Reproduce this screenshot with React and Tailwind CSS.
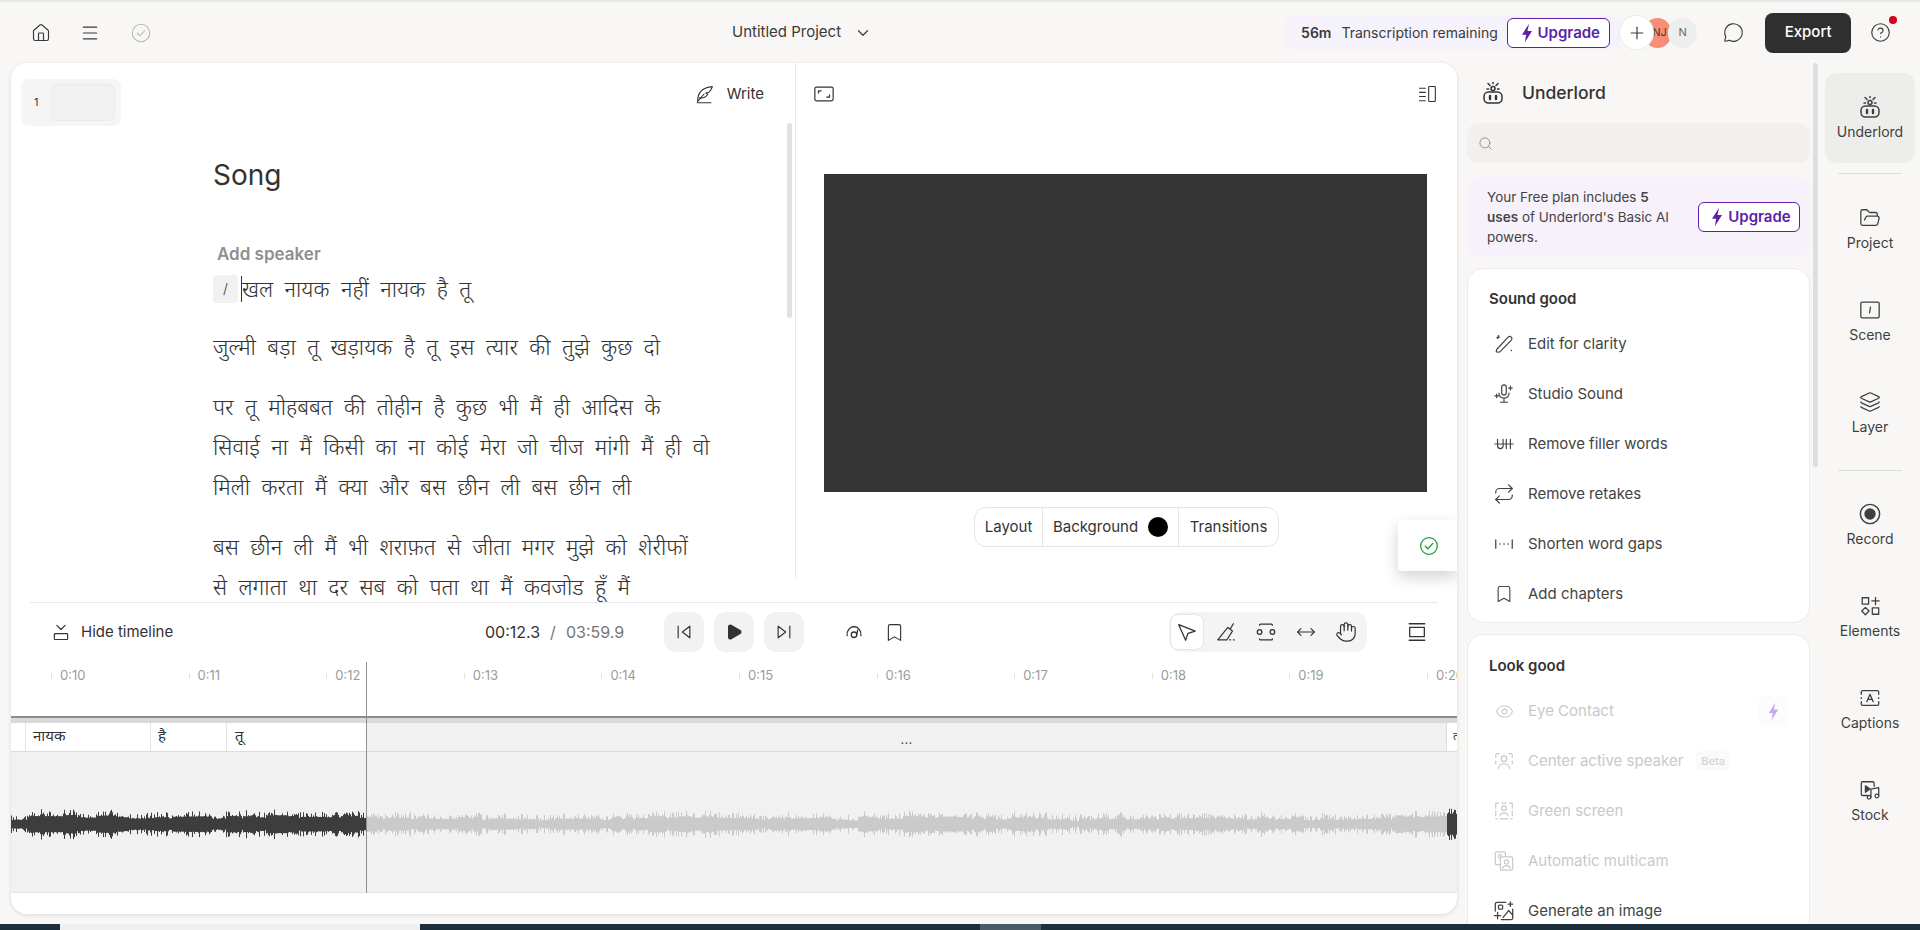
import { ChevronDown, Search, CircleHelp, Plus, Play, FolderOpen, Layers, Home, Bookmark, Hand, Eye, Repeat, MessageCircle, MoveHorizontal } from "lucide-react"

const line = "fill-none stroke-current"

// small svg wrapper so all custom icons share the same stroke settings
function Ico({ size = 20, sw = 1.4, className = "", children }) {
    return (
        <svg width={size} height={size} viewBox="0 0 24 24" strokeWidth={sw} strokeLinecap="round" strokeLinejoin="round" className={`${line} shrink-0 ${className}`}>
            {children}
        </svg>
    )
}

const Bolt = ({ size = 20, className = "" }) => (
    <svg width={size} height={size} viewBox="0 0 24 24" className={`shrink-0 fill-current ${className}`}>
        <path d="M14.500 1L6 14h5l-1.500 9L18 9.500h-5.500z" />
    </svg>
)
const MenuIcon = () => <Ico size={20}><path d="M4 5h16M4 12h16M4 19h16" /></Ico>
const SavedIcon = () => <Ico size={22} sw={1.2} className="text-[#b9b9b7]"><circle cx="12" cy="12" r="9.500" /><path d="M8 12.200l2.800 2.800 5-5.400" /></Ico>
const FeatherIcon = () => (
    <Ico size={22} sw={1.2}>
        <path d="M4 20c0-8 4-15 16-16-1 3-2 5-4 6l-3 1 2 1c-1 3-5 5-9 4" />
        <path d="M3.500 21.500h15M4 20l7-8" />
    </Ico>
)
const RobotIcon = ({ size = 24 }) => (
    <Ico size={size} sw={1.5}>
        <rect x="3" y="11" width="18" height="11" rx="4.500" />
        <path d="M9 15v3M15 15v3" strokeWidth="2.400" />
        <circle cx="12" cy="7.500" r="2" />
        <path d="M7 2.500l2 2M17 2.500l-2 2M12 1.500v1M6 8h1.500M16.500 8H18" />
    </Ico>
)
const PanelIcon = () => (
    <Ico size={20} sw={1.3}>
        <rect x="14" y="3" width="8" height="18" rx="1" />
        <path d="M3 5h7M3 10h7M3 15h7M3 20h7" />
    </Ico>
)
const ExpandIcon = () => (
    <Ico size={22} sw={1.3}>
        <rect x="2" y="4.500" width="20" height="15" rx="2" />
        <path d="M6 11V8.500h3M18 13v2.500h-3" />
    </Ico>
)
const HideTimelineIcon = () => (
    <Ico size={20} sw={1.4}>
        <rect x="4" y="14" width="16" height="7" rx="1" />
        <path d="M7 4l5 5 5-5" />
    </Ico>
)
const PrevIcon = () => <Ico size={20}><path d="M5 5v14M19 5L10 12l9 7z" /></Ico>
const NextIcon = () => <Ico size={20}><path d="M19 5v14M5 5l9 7-9 7z" /></Ico>
const SpeedIcon = () => (
    <Ico size={22} sw={1.4}>
        <path d="M4.500 16A8.500 8.500 0 0 1 12 6a8.500 8.500 0 0 1 7.500 10" />
        <circle cx="12" cy="15" r="3" />
        <path d="M15 15l1-5" />
    </Ico>
)
const CursorIcon = () => <Ico size={22} sw={1.4}><path d="M3 4l18 7-8 2.500L10.500 21z" /></Ico>
const RazorIcon = () => (
    <Ico size={22} sw={1.3}>
        <path d="M3 20.500L14 7l5 4-6 9.500zM3 20.500h10M17 8l3-5M16 20.500h1M20 20.500h1" />
    </Ico>
)
const GapIcon = () => (
    <Ico size={22} sw={1.4}>
        <path d="M5 4.500c0-.6.4-1 1-1h12c.6 0 1 .4 1 1M5 19.500c0 .6.4 1 1 1h12c.6 0 1-.4 1-1" />
        <circle cx="5" cy="12" r="2.500" /><circle cx="19" cy="12" r="2.500" />
    </Ico>
)
const LayoutIcon = () => (
    <Ico size={22} sw={1.4}>
        <path d="M3.500 3h17M3.500 21h17" />
        <rect x="4" y="7" width="16" height="10" />
    </Ico>
)
const WandIcon = () => (
    <Ico size={22} sw={1.3}>
        <path d="M5 21l-1.500-.500L4 18 16.500 4.500c1-1 2.500-1 3.500 0s.8 2.300 0 3.200L7.500 20.500z" />
        <path d="M5 5.500v.1M20 19v.1M6 3v2M4.500 5h2" strokeWidth="1.700" />
    </Ico>
)
const MicIcon = () => (
    <Ico size={22} sw={1.3}>
        <rect x="9.500" y="2" width="5" height="11" rx="2.500" />
        <path d="M6.500 11c0 3 2 5.500 5.500 5.500s5.500-2.500 5.500-5.500M12 16.500V21M8 21h8M19 3.500v4M17 5.500h4M4 12v4M2 14h4" />
    </Ico>
)
const FillerIcon = () => (
    <Ico size={22} sw={1.3}>
        <path d="M5 7v7c0 2 1.200 3 3 3s3-1 3-3V7M14.500 7v10M19 7v10M2 12h20" />
    </Ico>
)
const GapsIcon = () => (
    <Ico size={22} sw={1.4}>
        <path d="M3 7.500v9M21 7.500v9" />
        <path d="M7.500 12h.1M12 12h.1M16.500 12h.1" strokeWidth="1.800" />
    </Ico>
)
const SpeakerIcon = () => (
    <Ico size={22} sw={1.3}>
        <circle cx="12" cy="9.500" r="3" />
        <path d="M6 20c.5-3.500 3-5 6-5s5.500 1.500 6 5M3 8V5c0-.6.4-1 1-1h2.500M21 8V5c0-.6-.4-1-1-1h-2.500M3 12v3M21 12v3" />
    </Ico>
)
const GreenIcon = () => (
    <Ico size={22} sw={1.3}>
        <circle cx="12" cy="9" r="2.500" />
        <path d="M7.500 17c.5-2 2.200-3 4.500-3s4 1 4.500 3M7.500 20.500h9M3 3.500h3M18 3.500h3M3 3.500V9M21 3.500V9M3 12v5M21 12v5M3 20.500h1.500M19.500 20.500H21M10 3.500h4" />
    </Ico>
)
const MulticamIcon = () => (
    <Ico size={22} sw={1.3}>
        <path d="M8 16H4a1.500 1.500 0 0 1-1.500-1.500v-11A1.500 1.500 0 0 1 4 2h8a1.500 1.500 0 0 1 1.500 1.500V6" />
        <circle cx="7.500" cy="6.500" r="1.800" />
        <rect x="8" y="7.500" width="13.500" height="14.500" rx="1.500" />
        <circle cx="14.700" cy="13" r="2.300" />
        <path d="M10.500 20c.6-2 2.200-3 4.200-3s3.600 1 4.200 3" />
    </Ico>
)
const ImageGenIcon = () => (
    <Ico size={22} sw={1.4}>
        <path d="M14 2.500H4.500a2 2 0 0 0-2 2V12M9 21.500h10.500a2 2 0 0 0 2-2V10" />
        <rect x="6" y="5.500" width="4.500" height="4.500" rx="1" />
        <path d="M11 19l6-7.500 4.500 5M19 2v5M16.500 4.500h5M5 13.500v7M1.500 17h7" />
    </Ico>
)
const SceneIcon = () => (
    <Ico size={22} sw={1.4}>
        <rect x="2" y="3.500" width="20" height="17" rx="1.500" />
        <path d="M12.500 9l-1 6" />
    </Ico>
)
const RecordIcon = () => (
    <svg width="22" height="22" viewBox="0 0 24 24" className="shrink-0">
        <circle cx="12" cy="12" r="10.500" fill="none" stroke="currentColor" strokeWidth="1.600" />
        <circle cx="12" cy="12" r="6.200" fill="currentColor" />
    </svg>
)
const ElementsIcon = () => (
    <Ico size={22} sw={1.4}>
        <rect x="3.500" y="3" width="7" height="7" />
        <path d="M18 2.500v8M14 6.500h8" />
        <path d="M7 13.500l4 4-4 4-4-4z" />
        <rect x="14.500" y="14" width="7" height="7" />
    </Ico>
)
const CaptionsIcon = () => (
    <Ico size={22} sw={1.4}>
        <path d="M2.500 8V5.500c0-.8.7-1.500 1.500-1.500h16c.8 0 1.500.7 1.500 1.500V8M2.500 16v2.500c0 .8.700 1.500 1.500 1.500h16c.8 0 1.500-.7 1.500-1.500V16M2.500 11.500v1M21.500 11.500v1" />
        <path d="M8.500 16l3.500-8 3.500 8M9.700 13.500h4.600" />
    </Ico>
)
const StockIcon = () => (
    <Ico size={22} sw={1.4}>
        <path d="M9 18H4a1.500 1.500 0 0 1-1.500-1.500v-12A1.500 1.500 0 0 1 4 3h11a1.500 1.500 0 0 1 1.500 1.500V8" />
        <path d="M7 7.500l5 3.500-5 3.500z" fill="currentColor" />
        <circle cx="11" cy="20" r="2" /><circle cx="19.500" cy="18.500" r="2" />
        <path d="M13 20v-9l8.500-1.500v9" />
    </Ico>
)

function UpgradeButton({ className = "" }) {
    return (
        <button className={`flex items-center justify-center gap-[1px] rounded-md border border-[#5b1fa8] bg-white text-[15px] font-semibold text-[#5b1fa8] ${className}`}>
            <Bolt />
            Upgrade
        </button>
    )
}

function Header() {
    return (
        <div className="flex h-[61px] items-center text-[#3a3a3a]">
            <div className="ml-[31px] w-[49px]"><Home size={20} strokeWidth={1.4} /></div>
            <div className="w-[50px]"><MenuIcon /></div>
            <SavedIcon />
            <div className="ml-[580px] flex items-center gap-[13px] text-[15px]">
                <span>Untitled Project</span>
                <ChevronDown size={18} strokeWidth={1.6} />
            </div>
            <div className="ml-[411px] flex h-[35px] w-[338px] items-center rounded-xl bg-[#f6f2fb] pl-[18px] text-sm">
                <span className="font-semibold">56m</span>
                <span className="ml-[10px] whitespace-nowrap">Transcription remaining</span>
                <UpgradeButton className="ml-[9px] h-[30px] w-[103px] shrink-0" />
            </div>
            <div className="ml-[-1px] flex items-center">
                <div className="z-10 flex h-[33px] w-[33px] items-center justify-center rounded-full bg-white shadow-[0_0_0_1px_#ececea]"><Plus size={20} strokeWidth={1.4} /></div>
                <div className="-ml-[9px] flex h-[30px] w-[27px] items-center justify-center rounded-full bg-[#f98c76] pl-1 text-[11px]">NJ</div>
                <div className="-ml-[3px] flex h-[30px] w-[29px] items-center justify-center rounded-full bg-[#eeeeec] text-[11px] text-[#666]">N</div>
            </div>
            <MessageCircle size={21} strokeWidth={1.3} className="ml-[26px]" />
            <button className="ml-[21px] h-[40px] w-[86px] rounded-lg bg-[#2f2f2f] text-[15px] font-medium text-white">Export</button>
            <div className="relative ml-[19px]">
                <CircleHelp size={21} strokeWidth={1.3} />
                <span className="absolute -top-[6px] -right-[6px] h-2 w-2 rounded-full bg-[#d5001c]" />
            </div>
        </div>
    )
}

const lyrics = [
    ["जुल्मी बड़ा तू खड़ायक है तू इस त्यार की तुझे कुछ दो"],
    ["पर तू मोहबबत की तोहीन है कुछ भी मैं ही आदिस के", "सिवाई ना मैं किसी का ना कोई मेरा जो चीज मांगी मैं ही वो", "मिली करता मैं क्या और बस छीन ली बस छीन ली"],
    ["बस छीन ली मैं भी शराफ़त से जीता मगर मुझे को शेरीफों", "से लगाता था दर सब को पता था मैं कवजोड हूँ मैं"],
]

function Editor() {
    return (
        <div className="relative flex h-[539px] w-[784px] shrink-0 overflow-hidden">
            <div className="w-[202px] shrink-0 pt-[16px] pl-[10px]">
                <div className="flex h-[47px] w-[100px] items-center rounded-lg bg-[#f5f5f5] pr-[6px] pl-[13px] text-[11px] text-[#333]">
                    <span>1</span>
                    <div className="ml-auto h-[37px] w-[64px] rounded-md border border-[#ebebeb] bg-[#f1f1f1]" />
                </div>
            </div>
            <div className="flex-1 text-[#333]">
                <div className="mt-[20px] flex h-[22px] items-center justify-end gap-[11px] pr-[31px] text-[15px]">
                    <FeatherIcon />
                    <span>Write</span>
                </div>
                <h1 className="mt-[52px] text-[28px] leading-9 text-[#333]">Song</h1>
                <div className="mt-[49px] pl-[4px] text-[17px] leading-6 font-semibold text-[#8f8f8f]">Add speaker</div>
                <div className="mt-[9px] flex h-[28px] items-center text-[22px] font-light [word-spacing:5.200px] whitespace-nowrap">
                    <span className="mr-[3px] flex h-[28px] w-[25px] items-center justify-center rounded-sm bg-[#f1f1f1] text-sm">/</span>
                    <span className="h-[26px] w-px bg-[#333]" />
                    <span>खल नायक नहीं नायक है तू</span>
                </div>
                <div className="mt-[24px] flex flex-col gap-[20px] text-[22px] leading-10 font-light [word-spacing:5.200px] whitespace-nowrap">
                    {lyrics.map((para, i) => (
                        <div key={i}>{para.map((l, j) => <div key={j}>{l}</div>)}</div>
                    ))}
                </div>
            </div>
            {/* scrollbar */}
            <div className="absolute top-[60px] right-[3px] h-[195px] w-[5px] rounded bg-[#e2e2e2]" />
        </div>
    )
}

function Preview() {
    return (
        <div className="h-[515px] flex-1 self-start border-l border-[#e9e9e9]">
            <div className="mt-[20px] flex h-[22px] items-center justify-between pr-[20px] pl-[17px] text-[#333]">
                <ExpandIcon />
                <PanelIcon />
            </div>
            <div className="mt-[69px] ml-[28px] h-[318px] w-[603px] bg-[#343434]" />
            <div className="mt-[15px] ml-[178px] flex h-[40px] w-[305px] items-center rounded-xl border border-[#e6e6e6] text-[15px] text-[#333]">
                <span className="flex h-full w-[68px] items-center justify-center border-r border-[#e6e6e6]">Layout</span>
                <span className="flex h-full w-[136px] items-center justify-center gap-[10px] border-r border-[#e6e6e6]">
                    Background
                    <span className="h-5 w-5 rounded-full bg-black" />
                </span>
                <span className="flex flex-1 items-center justify-center">Transitions</span>
            </div>
        </div>
    )
}

function Transport() {
    const tool = "flex h-[36px] w-[40px] items-center justify-center"
    const round = "flex h-10 w-10 shrink-0 items-center justify-center rounded-xl bg-[#f2f2f2]"
    return (
        <div className="mx-[19px] flex h-[60px] items-center border-t border-[#e9e9e9] pb-[1px] text-[#333]">
            <div className="ml-[21px]"><HideTimelineIcon /></div>
            <span className="ml-[10px] w-[92px] text-[15px] whitespace-nowrap">Hide timeline</span>
            <span className="ml-[312px] w-[56px] text-base">00:12.3</span>
            <span className="ml-[9px] w-[6px] text-base text-[#777]">/</span>
            <span className="ml-[10px] w-[60px] text-base text-[#777]">03:59.9</span>
            <div className={`${round} ml-[38px]`}><PrevIcon /></div>
            <div className={`${round} ml-[10px]`}><Play size={18} fill="currentColor" /></div>
            <div className={`${round} ml-[10px]`}><NextIcon /></div>
            <div className="ml-[39px]"><SpeedIcon /></div>
            <Bookmark size={21} strokeWidth={1.3} className="ml-[19px]" />
            <div className="ml-[264px] flex h-10 w-[198px] items-center rounded-xl bg-[#f4f4f4] pl-[1px]">
                <div className="flex h-[36px] w-[34px] items-center justify-center rounded-lg border border-[#e6e6e6] bg-white"><CursorIcon /></div>
                <div className={`${tool} ml-[2px]`}><RazorIcon /></div>
                <div className={tool}><GapIcon /></div>
                <div className={tool}><MoveHorizontal size={20} strokeWidth={1.3} /></div>
                <div className={tool}><Hand size={22} strokeWidth={1.3} /></div>
            </div>
            <div className="ml-[39px]"><LayoutIcon /></div>
        </div>
    )
}

const ticks = ["0:10", "0:11", "0:12", "0:13", "0:14", "0:15", "0:16", "0:17", "0:18", "0:19", "0:20"]

// deterministic fake audio envelope, one vertical stroke per step
function wavePath(from, to, seed, base) {
    let s = seed
    const rnd = () => {
        s = (s * 9301 + 49297) % 233280
        return s / 233280
    }
    let d = ""
    let block = base
    for (let x = from; x < to; x += 1) {
        // body stays thin, spikes come from the cubed noise
        if (rnd() > 0.82) block = base + (rnd() - 0.5) * 3.5
        const slow = Math.sin(x / 41 + seed) * 0.9
        const r = rnd()
        const a = Math.max(2, block + slow + r * r * r * 6)
        d += `M${x + 0.5} ${30 - a}V${30 + a * 1.05}`
    }
    return d
}

function Timeline() {
    return (
        <div className="relative overflow-hidden">
            <div className="flex h-[54px] pl-[40px] text-[13px] text-[#9b9b9b]">
                {ticks.map(t => (
                    <div key={t} className="mt-[6px] flex h-[16px] w-[137.6px] shrink-0 items-center gap-[8px]">
                        <span className="h-[6px] w-px bg-[#e4e4e4]" />
                        <span>{t}</span>
                    </div>
                ))}
            </div>
            <div className="h-[2px] bg-[#8c8c8c]" />
            <div className="h-[5px] bg-[#d9d9d9]" />
            <div className="flex h-[29px] overflow-hidden border-b border-[#dcdcdc] text-[15px] leading-5 text-[#333]">
                <div className="w-[15px] border-r border-[#e4e4e4]" />
                <div className="w-[125px] border-r border-[#e4e4e4] pt-[3px] pl-[7px]">नायक</div>
                <div className="w-[76px] border-r border-[#e4e4e4] pt-[3px] pl-[7px]">है</div>
                <div className="w-[139px] pt-[3px] pl-[8px]">तू</div>
                <div className="flex w-[1081px] items-center justify-center border-x border-[#dcdcdc] bg-[#f1f1f1] pt-[3px] text-[13px] tracking-wide text-[#555]">...</div>
                <div className="w-[10px] pt-[3px] pl-[6px] text-[11px]">त</div>
            </div>
            <div className="flex h-[141px] items-center border-b border-[#e6e6e6] bg-[#f1f1f1] pt-[3px]">
                <svg width="1446" height="60" viewBox="0 0 1446 60" strokeWidth="1" className="block">
                    <path d={wavePath(0, 18, 11, 5)} stroke="#3d3d3d" />
                    <path d={wavePath(18, 355, 7, 7)} stroke="#3d3d3d" />
                    <path d={wavePath(355, 1436, 23, 5.500)} stroke="#cacaca" />
                    <path d={wavePath(1436, 1446, 3, 10)} stroke="#3d3d3d" />
                </svg>
            </div>
            <div className="h-[19px]" />
            {/* playhead */}
            <div className="absolute top-0 left-[355px] h-[231px] w-px bg-[#8f8f8f]" />
        </div>
    )
}

function Row({ icon, label, muted, children }) {
    return (
        <div className={`flex h-[50px] items-center text-[15px] ${muted ? "text-[#c9c9c9]" : "text-[#444]"}`}>
            <div className="flex w-[40px] justify-center">{icon}</div>
            <span className="ml-[4px]">{label}</span>
            {children}
        </div>
    )
}

function AssistantPanel() {
    return (
        <div className="h-full w-[343px] shrink-0 overflow-hidden">
            <div className="flex h-[60px] items-center pl-[14px] text-[#333]">
                <RobotIcon />
                <span className="ml-[17px] text-[17.500px] font-medium">Underlord</span>
            </div>
            <div className="flex h-[40px] items-center rounded-xl bg-[#f1f0ee] pl-[11px] text-[#888]">
                <Search size={15} strokeWidth={1.4} />
            </div>
            <div className="mt-[14px] flex h-[80px] items-center justify-between rounded-xl bg-[#f6f1fb] pr-[10px] pl-[20px] text-[13.500px] leading-5 text-[#444]">
                <p className="w-[186px]">Your Free plan includes <b className="font-semibold">5 uses</b> of Underlord's Basic AI powers.</p>
                <UpgradeButton className="h-[30px] w-[102px] shrink-0" />
            </div>
            <div className="mt-[11px] h-[355px] rounded-2xl border border-[#ebebe9] bg-white pt-[15px] pl-[16px]">
                <h3 className="ml-[5px] h-[35px] text-[15px] leading-[30px] font-semibold text-[#333]">Sound good</h3>
                <Row icon={<WandIcon />} label="Edit for clarity" />
                <Row icon={<MicIcon />} label="Studio Sound" />
                <Row icon={<FillerIcon />} label="Remove filler words" />
                <Row icon={<Repeat size={22} strokeWidth={1.3} />} label="Remove retakes" />
                <Row icon={<GapsIcon />} label="Shorten word gaps" />
                <Row icon={<Bookmark size={20} strokeWidth={1.3} />} label="Add chapters" />
            </div>
            <div className="mt-[11px] h-[320px] rounded-2xl border border-[#ebebe9] bg-white pt-[15px] pl-[16px]">
                <h3 className="ml-[5px] h-[36px] text-[15px] leading-[32px] font-semibold text-[#333]">Look good</h3>
                <Row icon={<Eye size={19} strokeWidth={1.3} />} label="Eye Contact" muted>
                    <div className="mr-[21px] ml-auto flex h-[30px] w-[30px] items-center justify-center rounded-md bg-[#fcfcfc]">
                        <Bolt size={19} className="text-[#c6a9ec]" />
                    </div>
                </Row>
                <Row icon={<SpeakerIcon />} label="Center active speaker" muted>
                    <span className="ml-[13px] rounded bg-[#fafafa] px-[5px] py-[2px] text-[11px] font-medium text-[#d5d5d5]">Beta</span>
                </Row>
                <Row icon={<GreenIcon />} label="Green screen" muted />
                <Row icon={<MulticamIcon />} label="Automatic multicam" muted />
                <Row icon={<ImageGenIcon />} label="Generate an image" />
            </div>
        </div>
    )
}

const railTop = [
    { label: "Project", icon: <FolderOpen size={22} strokeWidth={1.4} /> },
    { label: "Scene", icon: <SceneIcon /> },
    { label: "Layer", icon: <Layers size={22} strokeWidth={1.4} /> },
]
const railBottom = [
    { label: "Record", icon: <RecordIcon /> },
    { label: "Elements", icon: <ElementsIcon /> },
    { label: "Captions", icon: <CaptionsIcon /> },
    { label: "Stock", icon: <StockIcon /> },
]

function RailItem({ label, icon }) {
    return (
        <div className="flex h-[92px] flex-col items-center justify-center gap-[5px] text-[14px] leading-[18px] text-[#3f3f3f]">
            {icon}
            <span>{label}</span>
        </div>
    )
}

function Rail() {
    return (
        <div className="ml-[7px] w-[90px] shrink-0 pt-[10px]">
            <div className="flex h-[90px] flex-col items-center justify-center gap-[4px] rounded-xl bg-[#ededeb] text-[14px] leading-[18px] text-[#3f3f3f]">
                <RobotIcon />
                <span>Underlord</span>
            </div>
            <div className="mx-[13px] mt-[10px] mb-[9px] h-px bg-[#dfdfdd]" />
            {railTop.map(i => <RailItem key={i.label} {...i} />)}
            <div className="mx-[13px] mt-[11px] mb-[8px] h-px bg-[#dfdfdd]" />
            {railBottom.map(i => <RailItem key={i.label} {...i} />)}
        </div>
    )
}

export default function App() {
    return (
        <div className="flex h-[930px] w-[1920px] flex-col overflow-hidden bg-[#f8f7f5] font-['Inter','Noto_Sans',sans-serif]">
            <div className="h-[2px] bg-[#e6e6e4]" />
            <Header />
            <div className="flex h-[861px] pl-[11px]">
                <div className="relative h-[851px] w-[1446px] shrink-0 overflow-hidden rounded-2xl bg-white shadow-[0_1px_4px_rgba(0,0,0,0.12)]">
                    <div className="flex">
                        <Editor />
                        <Preview />
                    </div>
                    <Transport />
                    <Timeline />
                    {/* saved toast */}
                    <div className="absolute top-[457px] right-0 flex h-[51px] w-[59px] items-center rounded-l bg-white pl-[21px] shadow-[0_6px_16px_rgba(0,0,0,0.18)]">
                        <svg width="20" height="20" viewBox="0 0 24 24" strokeWidth="1.500" strokeLinecap="round" strokeLinejoin="round" className="fill-none stroke-[#1c9a2e]">
                            <circle cx="12" cy="12" r="10" /><path d="M7.500 12.300l3 3 6-6.300" />
                        </svg>
                    </div>
                </div>
                <div className="ml-[10px] flex h-full">
                    <AssistantPanel />
                    <div className="ml-[3px] h-[404px] w-[5px] shrink-0 rounded bg-[#dedede]" />
                    <Rail />
                </div>
            </div>
            {/* taskbar peeking in at the bottom edge */}
            <div className="flex h-[6px] bg-[#1b2f3d]">
                <div className="ml-[60px] w-[360px] bg-[#efefef]" />
                <div className="ml-[560px] w-[61px] bg-[#4a5a66]" />
            </div>
        </div>
    )
}
